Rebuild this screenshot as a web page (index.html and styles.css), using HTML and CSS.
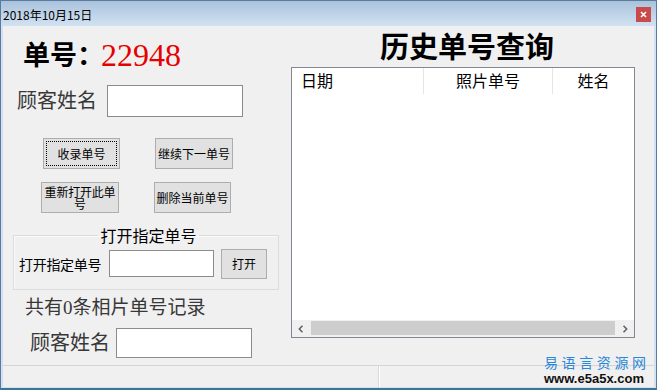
FILE: index.html
```html
<!DOCTYPE html>
<html lang="zh-CN">
<head>
<meta charset="utf-8">
<title>2018年10月15日</title>
<link rel="stylesheet" href="styles.css">
</head>
<body>
<div class="window">
  <div class="titlebar">
    <span class="title">2018年10月15日</span>
    <span class="close"><svg width="7" height="7" viewBox="0 0 7 7"><path d="M1 1L6 6M6 1L1 6" stroke="#fff" stroke-width="1.6"/></svg></span>
  </div>
  <div class="client">
    <div class="left">
      <div class="order"><span class="order-label">单号：</span><span class="order-no">22948</span></div>
      <div class="field-row row-top">
        <span class="serif-label">顾客姓名</span>
        <input class="textbox tb-name" type="text">
      </div>
      <div class="btn-row row1">
        <button class="btn btn-a focus">收录单号</button>
        <button class="btn btn-b">继续下一单号</button>
      </div>
      <div class="btn-row row2">
        <button class="btn btn-b wrap">重新打开此单号</button>
        <button class="btn btn-a">删除当前单号</button>
      </div>
      <fieldset class="group">
        <legend class="group-title">打开指定单号</legend>
        <div class="group-row">
          <span class="small-label">打开指定单号</span>
          <input class="textbox tb-open" type="text">
          <button class="btn btn-open">打开</button>
        </div>
      </fieldset>
      <div class="count">共有0条相片单号记录</div>
      <div class="field-row row-bottom">
        <span class="serif-label">顾客姓名</span>
        <input class="textbox tb-name2" type="text">
      </div>
    </div>
    <div class="right">
      <div class="history-title">历史单号查询</div>
      <div class="listview">
        <div class="lv-header">
          <div class="col col-date">日期</div>
          <div class="col col-no">照片单号</div>
          <div class="col col-name">姓名</div>
        </div>
        <div class="lv-body"></div>
        <div class="hscroll">
          <div class="arrow"><svg width="6" height="8" viewBox="0 0 6 8"><path d="M4.5 0.8L1.3 4L4.5 7.2" fill="none" stroke="#606060" stroke-width="1.5"/></svg></div>
          <div class="track"></div>
          <div class="arrow"><svg width="6" height="8" viewBox="0 0 6 8"><path d="M1.5 0.8L4.7 4L1.5 7.2" fill="none" stroke="#606060" stroke-width="1.5"/></svg></div>
        </div>
      </div>
    </div>
  </div>
  <div class="statusbar">
    <div class="pane pane1"></div>
    <div class="pane pane2"></div>
  </div>
  <div class="watermark">
    <div class="wm-cn">易语言资源网</div>
    <div class="wm-url">www.e5a5x.com</div>
  </div>
</div>
</body>
</html>
```
FILE: styles.css
```css
html, body {
  margin: 0;
  padding: 0;
  background: #ffffff;
}
.window {
  position: relative;
  width: 657px;
  height: 390px;
  box-sizing: border-box;
  border: 1px solid #5a7c9c;
  border-bottom: 2px solid #3d7596;
  background: #d2e2f2;
  display: flex;
  flex-direction: column;
  font-family: "Noto Sans CJK SC", sans-serif;
  color: #000;
  overflow: hidden;
}
.titlebar {
  height: 25px;
  flex: none;
  display: flex;
  align-items: center;
  justify-content: space-between;
  padding: 0 5px 0 2px;
  background: linear-gradient(#a9c2dc, #c6d9ec 70%, #d0e1f1);
}
.title {
  font-size: 12px;
  line-height: 14px;
  color: #000;
  margin-top: 2px;
}
.close {
  width: 15px;
  height: 15px;
  background: #c84a4a;
  display: flex;
  align-items: center;
  justify-content: center;
  margin-top: 2px;
}
.client {
  height: 339px;
  flex: none;
  margin: 0 2px;
  background: #f0f0f0;
  display: flex;
}
.left {
  width: 282px;
  flex: none;
}
.right {
  flex: 1;
}
.order {
  margin-top: 9px;
  height: 40px;
  padding-left: 20px;
  display: flex;
  align-items: center;
}
.order-label {
  font-family: "Noto Sans CJK SC", serif;
  font-weight: bold;
  font-size: 27px;
  line-height: 40px;
  margin-top: -2px;
}
.order-no {
  font-family: "Liberation Serif", serif;
  font-size: 32px;
  line-height: 40px;
  color: #e60000;
  margin-left: -3px;
}
.field-row {
  display: flex;
  align-items: center;
}
.row-top {
  margin-top: 10px;
  height: 31px;
  padding-left: 14px;
}
.serif-label {
  font-family: "Liberation Serif", "Noto Sans CJK SC", serif;
  font-size: 20px;
  line-height: 28px;
  color: #383838;
  width: 80px;
  letter-spacing: 0;
}
.textbox {
  box-sizing: border-box;
  margin: 0;
  padding: 0;
  background: #fff;
  border: 1px solid #8b8b8b;
  outline: none;
}
.tb-name {
  width: 136px;
  height: 32px;
  margin-left: 10px;
}
.btn {
  box-sizing: border-box;
  margin: 0;
  padding: 0;
  background: #e1e1e1;
  border: 1px solid #adadad;
  font-family: "Noto Sans CJK SC", sans-serif;
  font-size: 12px;
  line-height: 14px;
  color: #000;
}
.btn-row {
  display: flex;
  gap: 35px;
  height: 30px;
}
.row1 {
  margin-top: 22px;
  padding-left: 40px;
}
.row2 {
  margin-top: 14px;
  padding-left: 38px;
}
.btn-a {
  width: 77px;
  height: 31px;
}
.btn-b {
  width: 78px;
  height: 31px;
}
.focus {
  outline: 1px dotted #000;
  outline-offset: -4px;
}
.wrap {
  line-height: 12px;
  padding-top: 1px;
  letter-spacing: -0.2px;
}
.group {
  margin: 12px 0 0 10px;
  width: 266px;
  box-sizing: border-box;
  padding: 2px 0 10px 5px;
  border: 1px solid #dcdcdc;
  box-shadow: inset 1px 1px 0 #fafafa;
}
.group-title {
  margin: 0 auto;
  padding: 0 2px;
  font-size: 16px;
  line-height: 22px;
  color: #000;
}
.group-row {
  display: flex;
  align-items: center;
  height: 31px;
}
.small-label {
  font-size: 14px;
  line-height: 18px;
  width: 84px;
  letter-spacing: -0.3px;
}
.tb-open {
  width: 105px;
  height: 27px;
  margin-left: 6px;
}
.btn-open {
  width: 46px;
  height: 30px;
  margin-left: 7px;
}
.count {
  margin-top: 4px;
  padding-left: 22px;
  font-family: "Liberation Serif", "Noto Sans CJK SC", serif;
  font-size: 19px;
  line-height: 28px;
  color: #383838;
}
.row-bottom {
  margin-top: 6px;
  height: 30px;
  padding-left: 27px;
}
.tb-name2 {
  width: 136px;
  height: 30px;
  margin-left: 6px;
}
.history-title {
  margin-top: 1px;
  height: 36px;
  padding-left: 95px;
  font-weight: bold;
  font-size: 29px;
  line-height: 36px;
  letter-spacing: 0;
}
.listview {
  margin: 4px 0 0 6px;
  width: 344px;
  height: 271px;
  box-sizing: border-box;
  border: 1px solid #828790;
  background: #fff;
  display: flex;
  flex-direction: column;
}
.lv-header {
  height: 26px;
  display: flex;
  font-size: 16px;
  line-height: 24px;
  color: #000;
}
.col {
  box-sizing: border-box;
  height: 26px;
}
.col-date {
  width: 132px;
  padding-left: 9px;
  border-right: 1px solid #e5e5e5;
}
.col-no {
  width: 129px;
  text-align: center;
  border-right: 1px solid #e5e5e5;
}
.col-name {
  flex: 1;
  text-align: center;
}
.lv-body {
  flex: 1;
}
.hscroll {
  height: 17px;
  display: flex;
  background: #f0f0f0;
}
.arrow {
  width: 18px;
  display: flex;
  align-items: center;
  justify-content: center;
  background: #f0f0f0;
}
.track {
  flex: 1;
  margin: 1px 1px 2px;
  background: #cdcdcd;
}
.statusbar {
  height: 21px;
  flex: none;
  margin: 0 2px 1px;
  background: #f0f0f0;
  border-top: 1px solid #d5d5d5;
  display: flex;
}
.pane1 {
  width: 375px;
  border-right: 1px solid #d9d9d9;
  box-shadow: 1px 0 0 #fff;
}
.pane2 {
  flex: 1;
}
.watermark {
  position: absolute;
  right: 8px;
  bottom: 2px;
  width: 104px;
}
.wm-cn {
  font-family: "Noto Sans CJK SC", sans-serif;
  font-size: 14px;
  line-height: 18px;
  letter-spacing: 3.6px;
  color: #2a86d8;
  white-space: nowrap;
}
.wm-url {
  font-family: "Liberation Sans", Arial, sans-serif;
  font-weight: bold;
  font-size: 13px;
  line-height: 15px;
  color: #111;
  white-space: nowrap;
}
```
